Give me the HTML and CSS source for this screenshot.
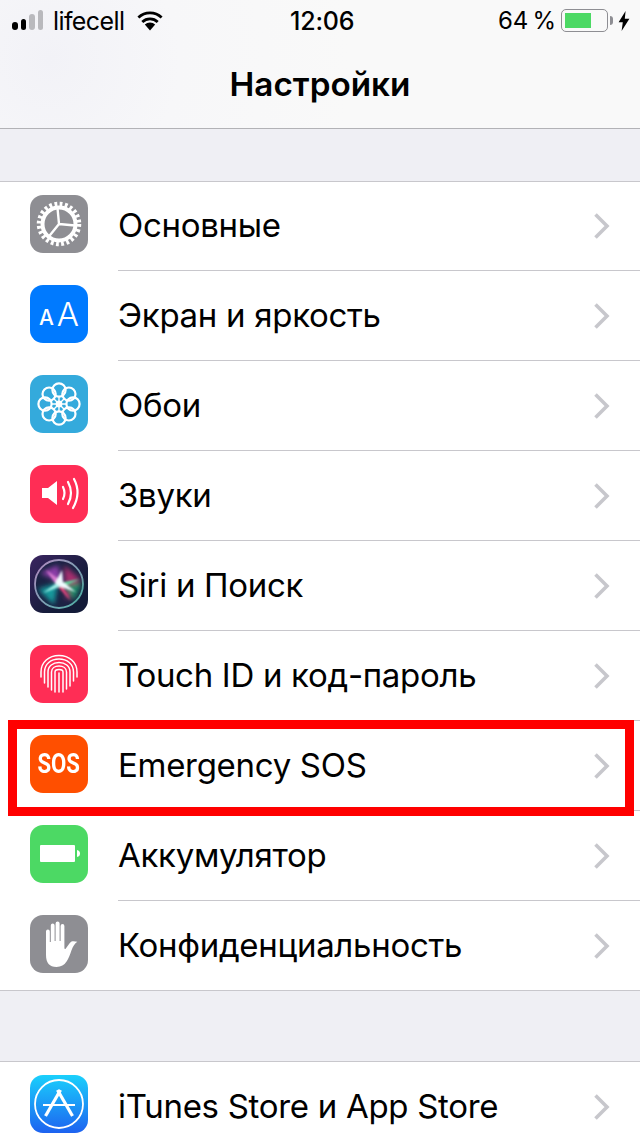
FILE: index.html
```html
<!DOCTYPE html>
<html lang="ru">

<head>
	<meta charset="UTF-8">
	<meta name="viewport" content="width=device-width, initial-scale=1.0">
	<title>Настройки</title>
	<link rel="stylesheet" href="styles.css">
</head>

<body>
	<header class="top">
		<div class="status">
			<div class="signal">
				<span class="bar b1"></span>
				<span class="bar b2"></span>
				<span class="bar b3 off"></span>
				<span class="bar b4 off"></span>
			</div>
			<span class="carrier">lifecell</span>
			<svg class="wifi" width="26" height="20" viewBox="0 0 26 20">
				<path d="M13 19.500 7.800 13.600a7.600 7.600 0 0 1 10.400 0z" fill="#000"/>
				<path d="M5.300 10.900a11.200 11.200 0 0 1 15.400 0" fill="none" stroke="#000" stroke-width="2.800"/>
				<path d="M1.400 6.600a16.800 16.800 0 0 1 23.200 0" fill="none" stroke="#000" stroke-width="2.800"/>
			</svg>
			<span class="time">12:06</span>
			<span class="percent">64 %</span>
			<div class="battery"><span class="charge"></span></div>
			<span class="nub"></span>
			<svg class="bolt" width="12" height="20" viewBox="0 0 12 20">
				<path d="M7.600 0 0.600 11.200h4.200L3.600 20l7.800-12.200H6.800z" fill="#000"/>
			</svg>
		</div>
		<h1>Настройки</h1>
	</header>

	<section class="group first-group">
		<div class="row">
			<div class="icon gray">
				<svg width="58" height="58" viewBox="0 0 58 58">
					<circle cx="29" cy="29" r="20" fill="none" stroke="#fff" stroke-width="4.500" stroke-dasharray="2.800 2.440"/>
					<circle cx="29" cy="29" r="16.500" fill="none" stroke="#fff" stroke-width="4"/>
					<path d="M29 29 27.500 13M29 29 45 30.500M29 29 18.500 42" stroke="#fff" stroke-width="2.400" fill="none"/>
				</svg>
			</div>
			<div class="row-body"><span class="label">Основные</span><svg class="chevron" width="18" height="28" viewBox="0 0 18 28"><path d="M2.500 2.500 14 14 2.500 25.500" fill="none" stroke="#c7c7cc" stroke-width="3.600"/></svg></div>
		</div>
		<div class="row">
			<div class="icon blue"><span class="small-a">A</span><span class="big-a">A</span></div>
			<div class="row-body"><span class="label">Экран и яркость</span><svg class="chevron" width="18" height="28" viewBox="0 0 18 28"><path d="M2.500 2.500 14 14 2.500 25.500" fill="none" stroke="#c7c7cc" stroke-width="3.600"/></svg></div>
		</div>
		<div class="row">
			<div class="icon teal">
				<svg width="58" height="58" viewBox="0 0 58 58" fill="none" stroke="#fff" stroke-width="2.200">
					<g>
						<circle cx="29" cy="15" r="6.600"/>
						<circle cx="29" cy="15" r="6.600" transform="rotate(45 29 29)"/>
						<circle cx="29" cy="15" r="6.600" transform="rotate(90 29 29)"/>
						<circle cx="29" cy="15" r="6.600" transform="rotate(135 29 29)"/>
						<circle cx="29" cy="15" r="6.600" transform="rotate(180 29 29)"/>
						<circle cx="29" cy="15" r="6.600" transform="rotate(225 29 29)"/>
						<circle cx="29" cy="15" r="6.600" transform="rotate(270 29 29)"/>
						<circle cx="29" cy="15" r="6.600" transform="rotate(315 29 29)"/>
					</g>
					<path d="M29 21V37M21 29H37M23.300 23.300 34.700 34.700M34.700 23.300 23.300 34.700" stroke-width="1.400"/>
					<circle cx="29" cy="29" r="3.400" fill="#fff" stroke="none"/>
				</svg>
			</div>
			<div class="row-body"><span class="label">Обои</span><svg class="chevron" width="18" height="28" viewBox="0 0 18 28"><path d="M2.500 2.500 14 14 2.500 25.500" fill="none" stroke="#c7c7cc" stroke-width="3.600"/></svg></div>
		</div>
		<div class="row">
			<div class="icon pink">
				<svg width="58" height="58" viewBox="0 0 58 58">
					<path d="M12 23h6l9-7v24l-9-7h-6z" fill="#fff"/>
					<g fill="none" stroke="#fff" stroke-width="2.200" stroke-linecap="round">
						<path d="M33 22q3 6 0 12"/>
						<path d="M38 17q6 11 0 22"/>
						<path d="M44 14q7.500 14 -1 29"/>
					</g>
				</svg>
			</div>
			<div class="row-body"><span class="label">Звуки</span><svg class="chevron" width="18" height="28" viewBox="0 0 18 28"><path d="M2.500 2.500 14 14 2.500 25.500" fill="none" stroke="#c7c7cc" stroke-width="3.600"/></svg></div>
		</div>
		<div class="row">
			<div class="icon siri">
				<svg width="58" height="58" viewBox="0 0 58 58">
					<defs>
						<filter id="soft"><feGaussianBlur stdDeviation="0.900"/></filter>
						<filter id="wide"><feGaussianBlur stdDeviation="2.500"/></filter>
						<linearGradient id="siriRing" x1="0" y1="0" x2="1" y2="1">
							<stop offset="0" stop-color="#b58ac0"/>
							<stop offset="1" stop-color="#4fb3a8"/>
						</linearGradient>
					</defs>
					<circle cx="29" cy="29" r="24" fill="#1b2344" stroke="url(#siriRing)" stroke-width="1.800"/>
					<g filter="url(#wide)">
						<path d="M10 18 28 10 32 28z" fill="#8c3ea8"/>
						<path d="M34 10 50 24 36 46z" fill="#a62f6e"/>
						<path d="M8 34 28 28 24 50z" fill="#149a9c"/>
						<path d="M34 30 52 28 44 46z" fill="#1f8a68"/>
					</g>
					<g filter="url(#soft)">
						<path d="M16 15 32 26 27 31z" fill="#d77ad0"/>
						<path d="M31 28 41 46 27 31z" fill="#e0457d"/>
						<path d="M13 38 28 27 32 31z" fill="#9ff0e8"/>
						<path d="M30 28 50 24 33 32z" fill="#58d89c"/>
						<path d="M25 28 32 15 33 27 46 37 31 32z" fill="#f2fbff"/>
					</g>
				</svg>
			</div>
			<div class="row-body"><span class="label">Siri и Поиск</span><svg class="chevron" width="18" height="28" viewBox="0 0 18 28"><path d="M2.500 2.500 14 14 2.500 25.500" fill="none" stroke="#c7c7cc" stroke-width="3.600"/></svg></div>
		</div>
		<div class="row">
			<div class="icon pink">
				<svg width="58" height="58" viewBox="0 0 58 58" fill="none" stroke="#fff" stroke-width="1.500" stroke-linecap="round">
					<path d="M11 32V27C11 17 19 10.500 29 10.500S47 17 47 27V32"/>
					<path d="M14.500 38V27C14.500 19 21 14 29 14S43.500 19 43.500 27V36"/>
					<path d="M18 42V27C18 21 23 17.500 29 17.500S40 21 40 27V41"/>
					<path d="M21.500 45V27C21.500 23 25 21 29 21S36.500 23 36.500 27V44"/>
					<path d="M25 47V27C25 25.500 27 24.500 29 24.500S33 25.500 33 27V47"/>
					<path d="M29 28V47"/>
				</svg>
			</div>
			<div class="row-body"><span class="label">Touch ID и код-пароль</span><svg class="chevron" width="18" height="28" viewBox="0 0 18 28"><path d="M2.500 2.500 14 14 2.500 25.500" fill="none" stroke="#c7c7cc" stroke-width="3.600"/></svg></div>
		</div>
		<div class="row">
			<div class="icon orange"><span class="sos">SOS</span></div>
			<div class="row-body"><span class="label">Emergency SOS</span><svg class="chevron" width="18" height="28" viewBox="0 0 18 28"><path d="M2.500 2.500 14 14 2.500 25.500" fill="none" stroke="#c7c7cc" stroke-width="3.600"/></svg></div>
			<div class="highlight"></div>
		</div>
		<div class="row">
			<div class="icon green">
				<svg width="58" height="58" viewBox="0 0 58 58">
					<rect x="10" y="20" width="35" height="17" rx="1" fill="#fff"/>
					<path d="M47 25q3 .5 3 3.500t-3 3.500z" fill="#fff"/>
				</svg>
			</div>
			<div class="row-body"><span class="label">Аккумулятор</span><svg class="chevron" width="18" height="28" viewBox="0 0 18 28"><path d="M2.500 2.500 14 14 2.500 25.500" fill="none" stroke="#c7c7cc" stroke-width="3.600"/></svg></div>
		</div>
		<div class="row">
			<div class="icon gray">
				<svg width="58" height="58" viewBox="0 0 58 58">
					<path d="M16 16.500a1.900 1.900 0 0 1 3.800 0V27h1V10.500a1.900 1.900 0 0 1 3.800 0V26h1V8.500a2 2 0 0 1 4 0V26h1V11a1.900 1.900 0 0 1 3.800 0V33c0 1 .8 1.300 1.400.4l4-5.400c2-2.600 5-1.600 7.500-1.200-2.600 2-4.300 4.500-5.800 8.500C38.500 44 36 52 26.500 52 19.500 52 16 48 16 40z" fill="#fff"/>
				</svg>
			</div>
			<div class="row-body"><span class="label">Конфиденциальность</span><svg class="chevron" width="18" height="28" viewBox="0 0 18 28"><path d="M2.500 2.500 14 14 2.500 25.500" fill="none" stroke="#c7c7cc" stroke-width="3.600"/></svg></div>
		</div>
	</section>

	<section class="group second-group">
		<div class="row">
			<div class="icon store">
				<svg width="58" height="58" viewBox="0 0 58 58" fill="none" stroke="#fff">
					<circle cx="29" cy="29" r="24" stroke-width="1.800"/>
					<path d="M13 30H45" stroke-width="1.800"/>
					<path d="M15.500 41 30.500 15" stroke-width="3.200"/>
					<path d="M42.500 41 27.500 15" stroke-width="3.200"/>
				</svg>
			</div>
			<div class="row-body"><span class="label">iTunes Store и App Store</span><svg class="chevron" width="18" height="28" viewBox="0 0 18 28"><path d="M2.500 2.500 14 14 2.500 25.500" fill="none" stroke="#c7c7cc" stroke-width="3.600"/></svg></div>
		</div>
	</section>
</body>

</html>
```

FILE: styles.css
```css
html, body {
	height: 100%;
}

body {
	margin: 0;
	height: 1136px;
	overflow: hidden;
	background-color: #efeff4;
	font-family: Inter, "Noto Sans", sans-serif;
	color: #000;
}

/* top bar */
.top {
	height: 128px;
	border-bottom: 1px solid #b2b2b6;
	background: radial-gradient(circle at 50px 60px, #f2f2f7 0, #f7f7f9 130px, #f9f9f9 300px);
}

.status {
	height: 41px;
	display: flex;
	align-items: center;
	font-size: 25px;
	letter-spacing: -0.2px;
	white-space: nowrap;
}

.signal {
	display: flex;
	align-items: flex-end;
	gap: 3px;
	margin-left: 12px;
	height: 20px;
	width: 33px;
	margin-top: -1px;
}

.bar {
	width: 5.500px;
	border-radius: 3px;
	background-color: #000;
}

.bar.off {
	background-color: #b9b9bd;
}

.b1 { height: 8px; }
.b2 { height: 11px; }
.b3 { height: 16px; }
.b4 { height: 20px; }

.carrier {
	margin-left: 8px;
	width: 72px;
	letter-spacing: -0.600px;
}

.wifi {
	margin-left: 12px;
}

.time {
	margin-left: 127px;
	width: 66px;
	font-weight: 500;
}

.percent {
	margin-left: 142px;
	width: 58px;
	font-size: 24px;
	word-spacing: -2px;
}

.battery {
	box-sizing: border-box;
	margin-left: 5px;
	width: 47px;
	height: 23px;
	padding: 3px;
	border: 1.500px solid #8e8e93;
	border-radius: 5px;
}

.charge {
	display: block;
	width: 26px;
	height: 100%;
	background-color: #4cd964;
}

.nub {
	margin-left: 2px;
	width: 3px;
	height: 9px;
	border-radius: 0 3px 3px 0;
	background-color: #8e8e93;
}

.bolt {
	margin-left: 5px;
}

h1 {
	margin: 0;
	padding-top: 24px;
	text-align: center;
	font-size: 33.300px;
	line-height: 38px;
	font-weight: 600;
}

/* lists */
.group {
	background-color: #fff;
	border-top: 1px solid #c8c7cc;
}

.first-group {
	margin-top: 52px;
	border-bottom: 1px solid #c8c7cc;
}

.second-group {
	margin-top: 70px;
}

.row {
	position: relative;
	display: flex;
	height: 90px;
	box-sizing: border-box;
	padding-top: 14px;
}

.row:first-child {
	height: 89px;
	padding-top: 13px;
}

.row:last-child {
	height: 89px;
}

.row-body {
	flex: 1;
	display: flex;
	align-items: center;
	justify-content: space-between;
	margin-top: -14px;
	margin-left: 30px;
	padding-right: 29px;
	border-bottom: 1px solid #c8c7cc;
}

.row:first-child .row-body {
	margin-top: -13px;
}

.row:last-child .row-body {
	border-bottom: none;
}

.label {
	font-size: 33px;
	letter-spacing: -0.300px;
	margin-top: -2px;
}

.chevron {
	flex: none;
}

/* app icons */
.icon {
	flex: none;
	display: flex;
	align-items: center;
	justify-content: center;
	width: 58px;
	height: 58px;
	margin-left: 30px;
	border-radius: 13px;
	overflow: hidden;
	color: #fff;
}

.gray { background-color: #8e8e93; }
.blue { background-color: #007aff; }
.teal { background-color: #34aadc; }
.pink { background-color: #ff2d55; }
.orange { background-color: #ff4f00; }
.green { background-color: #4cd964; }
.siri { background: linear-gradient(135deg, #3a2560, #131b38 70%); }
.store { background: linear-gradient(#1ad0fc, #1d62f0); }

.small-a {
	font-size: 21px;
	font-weight: 500;
	margin-right: 3px;
	margin-top: 6px;
}

.big-a {
	font-size: 33px;
	font-weight: 300;
}

.sos {
	font-family: Roboto, sans-serif;
	font-size: 27px;
	font-weight: 700;
	transform: scaleX(0.82);
	letter-spacing: -0.200px;
}

/* red marker drawn over the Emergency SOS row */
.highlight {
	position: absolute;
	left: 8px;
	top: -1px;
	width: 626px;
	height: 96px;
	box-sizing: border-box;
	border: 9px solid #f00;
}
```
